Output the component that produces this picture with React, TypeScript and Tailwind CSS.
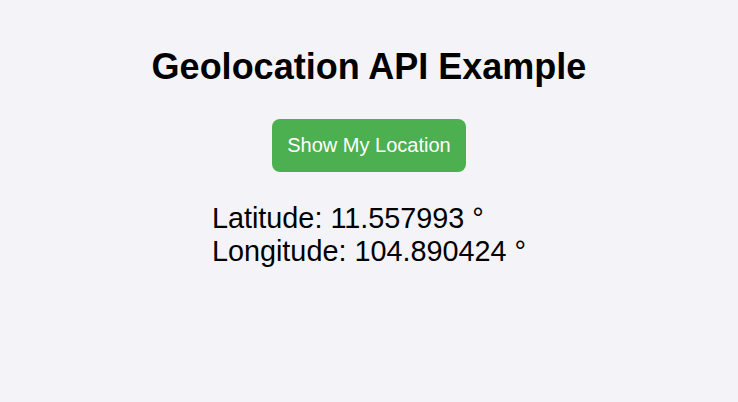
export default function App() {
  return (
    <div className="min-h-[402px] bg-[#f4f4f8] pt-[46px] text-center font-['Liberation_Sans',Arial,sans-serif] text-black">
      <h1 className="text-[36px] font-bold leading-[41px]">Geolocation API Example</h1>
      <button className="mt-[32px] rounded-lg bg-[#4caf50] px-[15px] py-[15px] text-[20px] leading-[23px] text-white">
        Show My Location
      </button>
      <div className="mt-[30px]">
        <div className="inline-block text-left text-[28.8px] leading-[33px]">
          <p>Latitude: 11.557993 °</p>
          <p>Longitude: 104.890424 °</p>
        </div>
      </div>
    </div>
  );
}
